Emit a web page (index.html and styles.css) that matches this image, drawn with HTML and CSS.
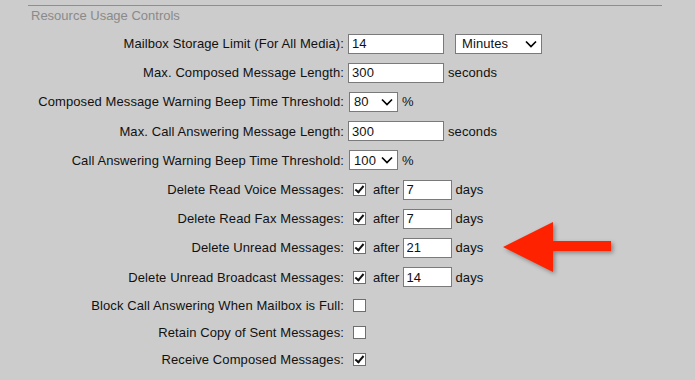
FILE: index.html
```html
<!DOCTYPE html>
<html lang="en">
<head>
    <meta charset="UTF-8">
    <title>Resource Usage Controls</title>
    <link rel="stylesheet" href="styles.css">
</head>
<body>
    <div class="panel">
        <div class="section-line"></div>
        <h2 class="section-title">Resource Usage Controls</h2>

        <div class="form-grid">
            <label class="field-label">Mailbox Storage Limit (For All Media):</label>
            <div class="field">
                <input type="text" class="text-wide" value="14">
                <span class="select-wrap select-units">
                    <select><option>Minutes</option><option>Hours</option></select>
                    <svg class="chevron" width="12" height="8" viewBox="0 0 12 8"><path d="M1 1.5 L6 6.5 L11 1.5" fill="none" stroke="#000" stroke-width="1.7"/></svg>
                </span>
            </div>

            <label class="field-label">Max. Composed Message Length:</label>
            <div class="field">
                <input type="text" class="text-wide" value="300">
                <span class="unit">seconds</span>
            </div>

            <label class="field-label">Composed Message Warning Beep Time Threshold:</label>
            <div class="field">
                <span class="select-wrap select-small">
                    <select><option>80</option><option>90</option><option>100</option></select>
                    <svg class="chevron" width="12" height="8" viewBox="0 0 12 8"><path d="M1 1.5 L6 6.5 L11 1.5" fill="none" stroke="#000" stroke-width="1.7"/></svg>
                </span>
                <span class="unit">%</span>
            </div>

            <label class="field-label">Max. Call Answering Message Length:</label>
            <div class="field">
                <input type="text" class="text-wide" value="300">
                <span class="unit">seconds</span>
            </div>

            <label class="field-label">Call Answering Warning Beep Time Threshold:</label>
            <div class="field">
                <span class="select-wrap select-small">
                    <select><option>100</option><option>90</option><option>80</option></select>
                    <svg class="chevron" width="12" height="8" viewBox="0 0 12 8"><path d="M1 1.5 L6 6.5 L11 1.5" fill="none" stroke="#000" stroke-width="1.7"/></svg>
                </span>
                <span class="unit">%</span>
            </div>

            <label class="field-label">Delete Read Voice Messages:</label>
            <div class="field">
                <input type="checkbox" class="check" checked>
                <span class="after">after</span>
                <input type="text" class="text-days" value="7">
                <span class="unit">days</span>
            </div>

            <label class="field-label">Delete Read Fax Messages:</label>
            <div class="field">
                <input type="checkbox" class="check" checked>
                <span class="after">after</span>
                <input type="text" class="text-days" value="7">
                <span class="unit">days</span>
            </div>

            <label class="field-label">Delete Unread Messages:</label>
            <div class="field">
                <input type="checkbox" class="check" checked>
                <span class="after">after</span>
                <input type="text" class="text-days" value="21">
                <span class="unit">days</span>
            </div>

            <label class="field-label">Delete Unread Broadcast Messages:</label>
            <div class="field">
                <input type="checkbox" class="check" checked>
                <span class="after">after</span>
                <input type="text" class="text-days" value="14">
                <span class="unit">days</span>
            </div>

            <label class="field-label short">Block Call Answering When Mailbox is Full:</label>
            <div class="field short">
                <input type="checkbox" class="check">
            </div>

            <label class="field-label short">Retain Copy of Sent Messages:</label>
            <div class="field short">
                <input type="checkbox" class="check">
            </div>

            <label class="field-label short">Receive Composed Messages:</label>
            <div class="field short">
                <input type="checkbox" class="check" checked>
            </div>
        </div>

        <!-- annotation arrow pointing at the "Delete Unread Messages" row -->
        <svg class="callout" width="695" height="380" viewBox="0 0 695 380">
            <polygon points="503,247 553,222 553,241 611,241 611,251 553,251 553,272" fill="#ff2200"/>
        </svg>
    </div>
</body>
</html>
```

FILE: styles.css
```css
/* Page */
body {
    margin: 0;
    background: #cccccc;
    font-family: 'Liberation Sans', Arial, sans-serif;
    font-size: 13px;
    letter-spacing: 0.1px;
    color: #111;
}

.panel {
    position: relative;
    height: 380px;
    overflow: hidden;
}

/* Section header */
.section-line {
    margin: 5px 33px 0 28px;
    border-top: 1px solid #8e8e8e;
}

.section-title {
    margin: 2px 0 0 31px;
    font-size: 13px;
    font-weight: normal;
    letter-spacing: 0;
    color: #8a8a8a;
    line-height: 16px;
}

/* Form rows */
.form-grid {
    display: grid;
    grid-template-columns: 344px auto;
    column-gap: 4px;
    margin-top: 5px;
}

.field-label {
    text-align: right;
    height: 29.2px;
    line-height: 29px;
    white-space: nowrap;
}

.field {
    display: flex;
    align-items: center;
    height: 29.2px;
}

.field-label.short,
.field.short {
    height: 27px;
    line-height: 27px;
}

/* Inputs */
input[type="text"] {
    box-sizing: border-box;
    height: 20px;
    margin: 0;
    padding: 0 3px;
    border: 1px solid #7a7a7a;
    background: #fff;
    font-family: inherit;
    font-size: 13px;
    letter-spacing: 0.1px;
    color: #111;
    outline: none;
}

.text-wide {
    width: 96px;
}

.text-days {
    width: 49px;
    height: 21px;
}

.unit {
    margin-left: 4px;
}

.after {
    margin: 0 3px 0 7px;
}

/* Selects */
.select-wrap {
    position: relative;
    display: inline-block;
    height: 20px;
}

.select-wrap select {
    appearance: none;
    -webkit-appearance: none;
    box-sizing: border-box;
    height: 20px;
    margin: 0;
    padding: 0 0 0 6px;
    border: 1px solid #7a7a7a;
    border-radius: 0;
    background: #fff;
    font-family: inherit;
    font-size: 13px;
    letter-spacing: 0.1px;
    color: #111;
    outline: none;
}

.select-units {
    margin-left: 11px;
}

.select-units select {
    width: 87px;
}

.select-small {
    margin-left: 1px;
}

.select-small select {
    width: 49px;
    padding-left: 4px;
}

.chevron {
    position: absolute;
    right: 5px;
    top: 6px;
    pointer-events: none;
}

/* Checkboxes */
.check {
    appearance: none;
    -webkit-appearance: none;
    box-sizing: border-box;
    position: relative;
    width: 13px;
    height: 13px;
    margin: 0 0 0 5px;
    border: 1px solid #6e6e6e;
    background: #fff;
}

.check:checked::after {
    content: "";
    position: absolute;
    left: 3px;
    top: 0px;
    width: 3px;
    height: 7px;
    border-right: 2px solid #111;
    border-bottom: 2px solid #111;
    transform: rotate(40deg);
}

/* Red annotation arrow */
.callout {
    position: absolute;
    left: 0;
    top: 0;
    pointer-events: none;
    filter: drop-shadow(2px 2px 2px rgba(0, 0, 0, 0.35));
}
```
